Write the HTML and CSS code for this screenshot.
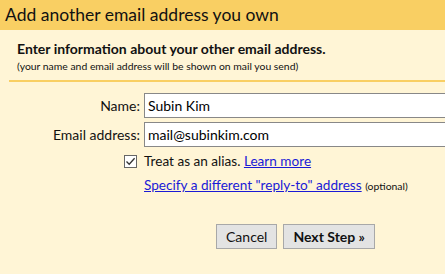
FILE: index.html
```html
<!DOCTYPE html>
<html lang="en">
<head>
  <meta charset="UTF-8" />
  <title>Add another email address you own</title>
  <link rel="stylesheet" href="styles.css">
</head>
<body>
  <div class="title-bar">Add another email address you own</div>
  <div class="content">
    <div class="intro">
      <div class="intro-head">Enter information about your other email address.</div>
      <div class="intro-note">(your name and email address will be shown on mail you send)</div>
    </div>
    <div class="form">
      <label class="field-label" for="name">Name:</label>
      <input class="field-input" type="text" id="name" value="Subin Kim" />
      <label class="field-label" for="email">Email address:</label>
      <input class="field-input" type="text" id="email" value="mail@subinkim.com" />
      <div class="check-cell">
        <span class="check-box">
          <svg width="11" height="11" viewBox="0 0 11 11"><path d="M1.5 5.5 L4.2 8.3 L9.6 2.2" fill="none" stroke="#333" stroke-width="1.3"/></svg>
        </span>
      </div>
      <div class="field-text">Treat as an alias. <a href="#">Learn more</a></div>
      <div></div>
      <div class="field-text"><a href="#">Specify a different "reply-to" address</a> <span class="optional">(optional)</span></div>
    </div>
    <div class="actions">
      <button class="btn">Cancel</button>
      <button class="btn btn-next">Next Step &raquo;</button>
    </div>
  </div>
</body>
</html>
```

FILE: styles.css
```css
body {
  margin: 0;
  background: #fff5d6;
  font-family: Lato, Arial, sans-serif;
  color: #111;
  overflow: hidden;
}
.title-bar {
  background: #f9cf63;
  height: 30px;
  line-height: 30px;
  padding-left: 5px;
  font-size: 17.5px;
  white-space: nowrap;
}
.content {
  padding-left: 9px;
}
.intro {
  padding: 9px 0 7px 8px;
  border-bottom: 2px solid #f9cf63;
}
.intro-head {
  font-size: 14px;
  font-weight: 700;
  line-height: 20px;
}
.intro-note {
  font-size: 10.4px;
  line-height: 14px;
}
.form {
  display: grid;
  grid-template-columns: 131px 320px;
  column-gap: 4px;
  row-gap: 4px;
  margin-top: 11px;
  align-items: center;
}
.field-label {
  text-align: right;
  font-size: 14px;
}
.field-input {
  height: 25px;
  box-sizing: border-box;
  border: 1px solid #888;
  background: #fff;
  font-family: inherit;
  font-size: 14px;
  padding: 0 3px;
  outline: none;
}
.check-cell {
  display: flex;
  justify-content: flex-end;
  padding-right: 3px;
}
.check-box {
  width: 11px;
  height: 11px;
  border: 1px solid #666;
  background: #fff;
  display: flex;
}
.field-text {
  font-size: 13.6px;
  line-height: 20px;
}
.field-text a {
  color: #1a1ad6;
}
.optional {
  font-size: 10.4px;
}
.actions {
  display: flex;
  justify-content: flex-end;
  gap: 6px;
  margin-top: 28px;
  padding-right: 70px;
}
.btn {
  height: 25px;
  border: 1px solid #a8a8a8;
  background: #e3e3e3;
  font-family: inherit;
  font-size: 14px;
  padding: 0 9px;
  color: #111;
}
.btn-next {
  font-weight: 700;
}
```
